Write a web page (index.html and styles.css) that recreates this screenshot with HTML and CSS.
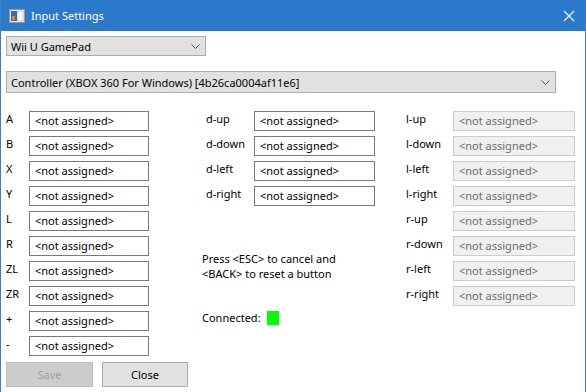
FILE: index.html
```html
<!DOCTYPE html>
<html lang="en">

<head>
    <meta charset="UTF-8">
    <title>Input Settings</title>
    <link rel="stylesheet" href="styles.css">
</head>

<body>
    <div class="window">
        <!-- Title bar -->
        <div class="titlebar">
            <svg class="app-icon" width="16" height="16" viewBox="0 0 16 16">
                <rect x="0.5" y="1.5" width="15" height="13" fill="#e8e8e8" stroke="#9a9a9a" />
                <rect x="2" y="3" width="6" height="10" fill="#3a6ea5" />
                <rect x="3" y="8" width="3" height="4" fill="#e08a2c" />
                <rect x="9" y="3" width="5" height="10" fill="#ffffff" stroke="#b8b8b8" stroke-width="0.6" />
            </svg>
            <span class="title">Input Settings</span>
            <svg class="close-icon" width="12" height="12" viewBox="0 0 12 12">
                <path d="M1 1 L11 11 M11 1 L1 11" stroke="#ffffff" stroke-width="1.1" />
            </svg>
        </div>

        <div class="content">
            <div class="combo combo-small">
                <span>Wii U GamePad</span>
                <svg class="chevron" width="9" height="5" viewBox="0 0 9 5">
                    <path d="M0.5 0.5 L4.5 4.5 L8.5 0.5" fill="none" stroke="#555" />
                </svg>
            </div>

            <div class="combo combo-wide">
                <span>Controller (XBOX 360 For Windows) [4b26ca0004af11e6]</span>
                <svg class="chevron" width="9" height="5" viewBox="0 0 9 5">
                    <path d="M0.5 0.5 L4.5 4.5 L8.5 0.5" fill="none" stroke="#555" />
                </svg>
            </div>

            <div class="columns">
                <!-- Buttons -->
                <div class="col col-left">
                    <div class="row"><span class="label">A</span><span class="field">&lt;not assigned&gt;</span></div>
                    <div class="row"><span class="label">B</span><span class="field">&lt;not assigned&gt;</span></div>
                    <div class="row"><span class="label">X</span><span class="field">&lt;not assigned&gt;</span></div>
                    <div class="row"><span class="label">Y</span><span class="field">&lt;not assigned&gt;</span></div>
                    <div class="row"><span class="label">L</span><span class="field">&lt;not assigned&gt;</span></div>
                    <div class="row"><span class="label">R</span><span class="field">&lt;not assigned&gt;</span></div>
                    <div class="row"><span class="label">ZL</span><span class="field">&lt;not assigned&gt;</span></div>
                    <div class="row"><span class="label">ZR</span><span class="field">&lt;not assigned&gt;</span></div>
                    <div class="row"><span class="label">+</span><span class="field">&lt;not assigned&gt;</span></div>
                    <div class="row"><span class="label">-</span><span class="field">&lt;not assigned&gt;</span></div>

                    <div class="actions">
                        <span class="btn btn-disabled">Save</span>
                        <span class="btn">Close</span>
                    </div>
                </div>

                <!-- D-pad -->
                <div class="col col-mid">
                    <div class="row"><span class="label">d-up</span><span class="field">&lt;not assigned&gt;</span></div>
                    <div class="row"><span class="label">d-down</span><span class="field">&lt;not assigned&gt;</span></div>
                    <div class="row"><span class="label">d-left</span><span class="field">&lt;not assigned&gt;</span></div>
                    <div class="row"><span class="label">d-right</span><span class="field">&lt;not assigned&gt;</span></div>

                    <p class="hint">Press &lt;ESC&gt; to cancel and<br>&lt;BACK&gt; to reset a button</p>

                    <div class="status">
                        <span>Connected:</span>
                        <span class="led"></span>
                    </div>
                </div>

                <!-- Sticks -->
                <div class="col col-right">
                    <div class="row"><span class="label">l-up</span><span class="field field-off">&lt;not assigned&gt;</span></div>
                    <div class="row"><span class="label">l-down</span><span class="field field-off">&lt;not assigned&gt;</span></div>
                    <div class="row"><span class="label">l-left</span><span class="field field-off">&lt;not assigned&gt;</span></div>
                    <div class="row"><span class="label">l-right</span><span class="field field-off">&lt;not assigned&gt;</span></div>
                    <div class="row"><span class="label">r-up</span><span class="field field-off">&lt;not assigned&gt;</span></div>
                    <div class="row"><span class="label">r-down</span><span class="field field-off">&lt;not assigned&gt;</span></div>
                    <div class="row"><span class="label">r-left</span><span class="field field-off">&lt;not assigned&gt;</span></div>
                    <div class="row"><span class="label">r-right</span><span class="field field-off">&lt;not assigned&gt;</span></div>
                </div>
            </div>
        </div>
    </div>
</body>

</html>
```

FILE: styles.css
```css
* {
    margin: 0;
    padding: 0;
    box-sizing: border-box;
}

body {
    font-family: 'Noto Sans', 'Open Sans', sans-serif;
    font-size: 11px;
    color: #000;
    background: #fff;
}

/* Window frame */
.window {
    width: 586px;
    height: 392px;
    border-left: 1px solid #3f7cc0;
    border-right: 1px solid #3f7cc0;
    background: #fff;
    overflow: hidden;
}

.titlebar {
    height: 31px;
    background: #2b79ca;
    display: flex;
    align-items: center;
    padding: 0 10px 0 8px;
    color: #fff;
}

.app-icon {
    margin-right: 6px;
}

.title {
    font-size: 11px;
    flex: 1;
}

/* Content */
.content {
    padding: 5px 0 0 5px;
}

.combo {
    height: 20px;
    background: #e1e1e1;
    border: 1px solid #adadad;
    display: flex;
    align-items: center;
    justify-content: space-between;
    padding: 0 5px 0 4px;
}

.combo-small {
    width: 200px;
}

.combo-wide {
    width: 550px;
    height: 22px;
    margin-top: 15px;
}

.chevron {
    margin-top: 1px;
}

.columns {
    display: flex;
    margin-top: 18px;
}

.col {
    display: flex;
    flex-direction: column;
    gap: 5px;
}

.row {
    display: flex;
    height: 20px;
}

.label {
    line-height: 16px;
}

.field {
    height: 20px;
    border: 1px solid #7a7a7a;
    background: #fff;
    line-height: 18px;
    padding-left: 5px;
}

.field-off {
    background: #f0f0f0;
    border-color: #cccccc;
    color: #6d6d6d;
}

.col-left {
    width: 143px;
}

.col-left .label {
    width: 23px;
}

.col-left .field {
    width: 120px;
}

.col-mid {
    width: 169px;
    margin-left: 57px;
}

.col-mid .label {
    width: 48px;
}

.col-mid .field {
    width: 121px;
}

.col-right {
    width: 169px;
    margin-left: 31px;
}

.col-right .label {
    width: 47px;
}

.col-right .field {
    width: 122px;
}

/* Left column buttons */
.actions {
    display: flex;
    gap: 9px;
    width: 182px;
    margin-top: 1px;
}

.btn {
    flex: none;
    width: 86px;
    height: 25px;
    background: #e1e1e1;
    border: 1px solid #adadad;
    display: flex;
    align-items: center;
    justify-content: center;
}

.btn-disabled {
    width: 87px;
    background: #cccccc;
    border-color: #bfbfbf;
    color: #a0a0a0;
}

/* Middle column notes */
.hint {
    margin: 40px 0 0 -4px;
    line-height: 15px;
}

.status {
    display: flex;
    align-items: center;
    gap: 6px;
    margin: 24px 0 0 -4px;
}

.led {
    width: 12px;
    height: 14px;
    background: #00ff00;
}
```
